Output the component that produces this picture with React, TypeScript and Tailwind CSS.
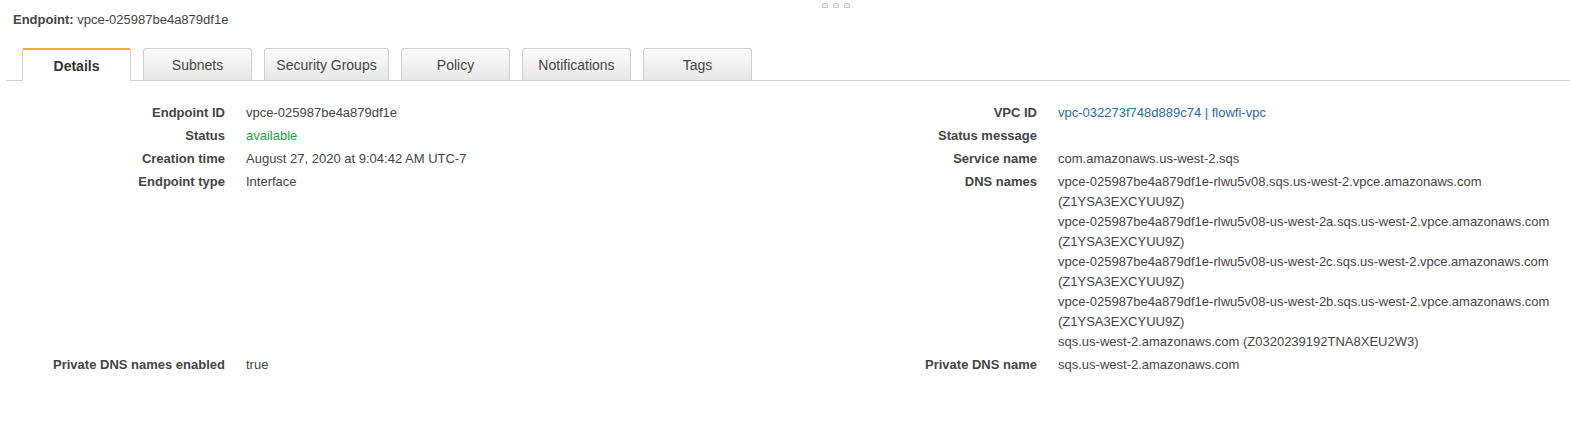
import React from "react";

const tabs = [
  { name: "Details", w: "w-[109px]", active: true },
  { name: "Subnets", w: "w-[109px]" },
  { name: "Security Groups", w: "w-[125px]" },
  { name: "Policy", w: "w-[109px]" },
  { name: "Notifications", w: "w-[109px]" },
  { name: "Tags", w: "w-[109px]" },
];

const dns = [
  "vpce-025987be4a879df1e-rlwu5v08.sqs.us-west-2.vpce.amazonaws.com",
  "(Z1YSA3EXCYUU9Z)",
  "vpce-025987be4a879df1e-rlwu5v08-us-west-2a.sqs.us-west-2.vpce.amazonaws.com",
  "(Z1YSA3EXCYUU9Z)",
  "vpce-025987be4a879df1e-rlwu5v08-us-west-2c.sqs.us-west-2.vpce.amazonaws.com",
  "(Z1YSA3EXCYUU9Z)",
  "vpce-025987be4a879df1e-rlwu5v08-us-west-2b.sqs.us-west-2.vpce.amazonaws.com",
  "(Z1YSA3EXCYUU9Z)",
  "sqs.us-west-2.amazonaws.com (Z0320239192TNA8XEU2W3)",
];

function Label({ children }: { children: React.ReactNode }) {
  return <div className="text-right font-bold text-[#444] pb-[3px]">{children}</div>;
}
function Value({ children }: { children?: React.ReactNode }) {
  return <div className="pl-[21px] text-[#444] pb-[3px]">{children}</div>;
}

export default function App() {
  return (
    <div className="relative w-[1570px] h-[446px] bg-white font-['Liberation_Sans',Arial,sans-serif] text-[13px] leading-[20px] text-[#444] overflow-hidden">
      <div className="absolute left-[822px] top-[3px] flex gap-[5px]">
        {[0, 1, 2].map((i) => (
          <div key={i} className="w-[6px] h-[5px] border border-[#c8c8c8] rounded-t-[2px] bg-[#eee]" />
        ))}
      </div>
      <div className="pt-[10px] pl-[13px] h-[29px]">
        <span className="font-bold">Endpoint:</span> <span>vpce-025987be4a879df1e</span>
      </div>
      <div className="ml-[6px] mt-[20px] flex items-end gap-[12px] pl-[16px] border-b border-[#cfcfcf] h-[32px]">
        {tabs.map((t) =>
          t.active ? (
            <div
              key={t.name}
              className={`${t.w} h-[33px] -mb-px bg-white border-x border-[#cfcfcf] border-t-2 border-t-[#ebb030] rounded-t-[2px] flex items-center justify-center font-bold text-[14px] text-[#333]`}
            >
              {t.name}
            </div>
          ) : (
            <div
              key={t.name}
              className={`${t.w} h-[32px] bg-gradient-to-b from-[#fbfbfb] to-[#e8e8e8] border-x border-t border-[#cfcfcf] rounded-t-[3px] flex items-center justify-center text-[14px] text-[#444]`}
            >
              {t.name}
            </div>
          )
        )}
      </div>
      <div className="pt-[22px] grid grid-cols-[225px_561px_251px_1fr]">
        <Label>Endpoint ID</Label>
        <Value>vpce-025987be4a879df1e</Value>
        <Label>VPC ID</Label>
        <Value>
          <span className="text-[#2d6aa6]">vpc-032273f748d889c74 | flowfi-vpc</span>
        </Value>

        <Label>Status</Label>
        <Value>
          <span className="text-[#1f9d48]">available</span>
        </Value>
        <Label>Status message</Label>
        <Value />

        <Label>Creation time</Label>
        <Value>August 27, 2020 at 9:04:42 AM UTC-7</Value>
        <Label>Service name</Label>
        <Value>com.amazonaws.us-west-2.sqs</Value>

        <Label>Endpoint type</Label>
        <Value>Interface</Value>
        <Label>DNS names</Label>
        <Value>
          {dns.map((d, i) => (
            <div key={i}>{d}</div>
          ))}
        </Value>

        <Label>Private DNS names enabled</Label>
        <Value>true</Value>
        <Label>Private DNS name</Label>
        <Value>sqs.us-west-2.amazonaws.com</Value>
      </div>
    </div>
  );
}
